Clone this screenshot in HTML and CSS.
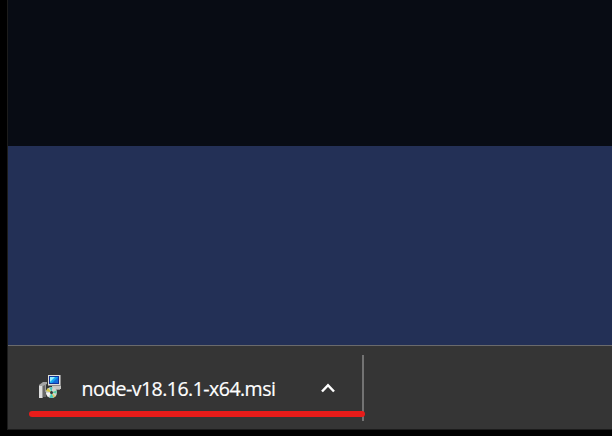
FILE: index.html
```html
<!DOCTYPE html>
<html lang="en">
<head>
<meta charset="utf-8">
<title>Downloads</title>
<link rel="stylesheet" href="styles.css">
</head>
<body>
<div class="window">
  <main class="page"></main>
  <section class="band"></section>
  <footer class="shelf">
    <div class="download">
      <svg class="file-icon" viewBox="0 0 24 25" width="24" height="25">
        <path d="M5 11h3v12H5z" fill="#686868"/>
        <path d="M1 12h4v12H1z" fill="#dcdcdc"/>
        <path d="M1 11l4-3h4v2L5 12H1z" fill="#a4a4a4"/>
        <path d="M4.500 12v12" stroke="#999"/>
        <path d="M7 10h1v8H7z" fill="#999"/>
        <path d="M10 1h13v11H10z" fill="#deded8"/>
        <path d="M22 1h1v11H10v-1h12z" fill="#8d8d8d"/>
        <path d="M11 2h10v8H11z" fill="#12349b"/>
        <path d="M12 3h8v6h-8z" fill="#17a9ee"/>
        <path d="M12 3h5l-5 5z" fill="#91efff"/>
        <path d="M20 3v6h-6z" fill="#126cdd"/>
        <path d="M14 12h9v3h-9z" fill="#c6c6c2"/>
        <path d="M18 15h4v1h-4z" fill="#999"/>
        <circle cx="13.500" cy="18.500" r="5.500" fill="#cfd5cd"/>
        <path d="M13.500 18.500L8 17l2-3z" fill="#d5c943"/>
        <path d="M13.500 18.500l-2-5 3-.5z" fill="#49c5bc"/>
        <path d="M13.500 18.500l5-2v3z" fill="#55cda1"/>
        <path d="M13.500 18.500l2 5-4 .5z" fill="#42c9bb"/>
        <path d="M13.500 18.500l4 4-2 1z" fill="#dbc75b"/>
        <path d="M13.500 18.500L8 19l2 4z" fill="#f4f4f4"/>
        <circle cx="13.500" cy="18.500" r="1.500" fill="#333"/>
      </svg>
      <span class="name">node-v18.16.1-x64.msi</span>
      <svg class="chevron" viewBox="0 0 14 10" width="14" height="10">
        <path d="M1 8.500l6-6.300 6 6.300" fill="none" stroke="#fff" stroke-width="2.500"/>
      </svg>
    </div>
    <div class="divider"></div>
    <div class="underline"></div>
  </footer>
</div>
</body>
</html>
```
FILE: styles.css
```css
* { box-sizing: border-box; }
body { margin: 0; background: #000; overflow: hidden; }
.window {
  display: flex;
  flex-direction: column;
  height: 430px;
  margin-left: 7px;
  border-left: 1px solid #1c1c1c;
  border-bottom: 1px solid #1c1c1c;
}
.page { height: 146px; background: #080c14; }
.band { height: 199px; background: #233056; }
.shelf {
  position: relative;
  display: flex;
  flex: 1;
  padding-top: 9px;
  border-top: 1px solid #6a6a6c;
  background: #353535;
}
.download {
  display: flex;
  align-items: center;
  width: 354px;
  height: 66px;
  padding-left: 30px;
}
.file-icon { flex: none; margin-top: -3px; }
.name {
  width: 195px;
  margin: 2px 0 0 19.500px;
  color: #fff;
  font: 19.500px/28px "Open Sans", "Noto Sans", sans-serif;
  letter-spacing: -0.520px;
  -webkit-text-stroke: 0.200px #fff;
  white-space: nowrap;
}
.chevron { margin-left: 44px; }
.divider { width: 2px; height: 66px; background: #737373; }
.underline {
  position: absolute;
  left: 21px;
  top: 65px;
  width: 336px;
  height: 6px;
  border-radius: 3px;
  background: #e81c1a;
}
```
